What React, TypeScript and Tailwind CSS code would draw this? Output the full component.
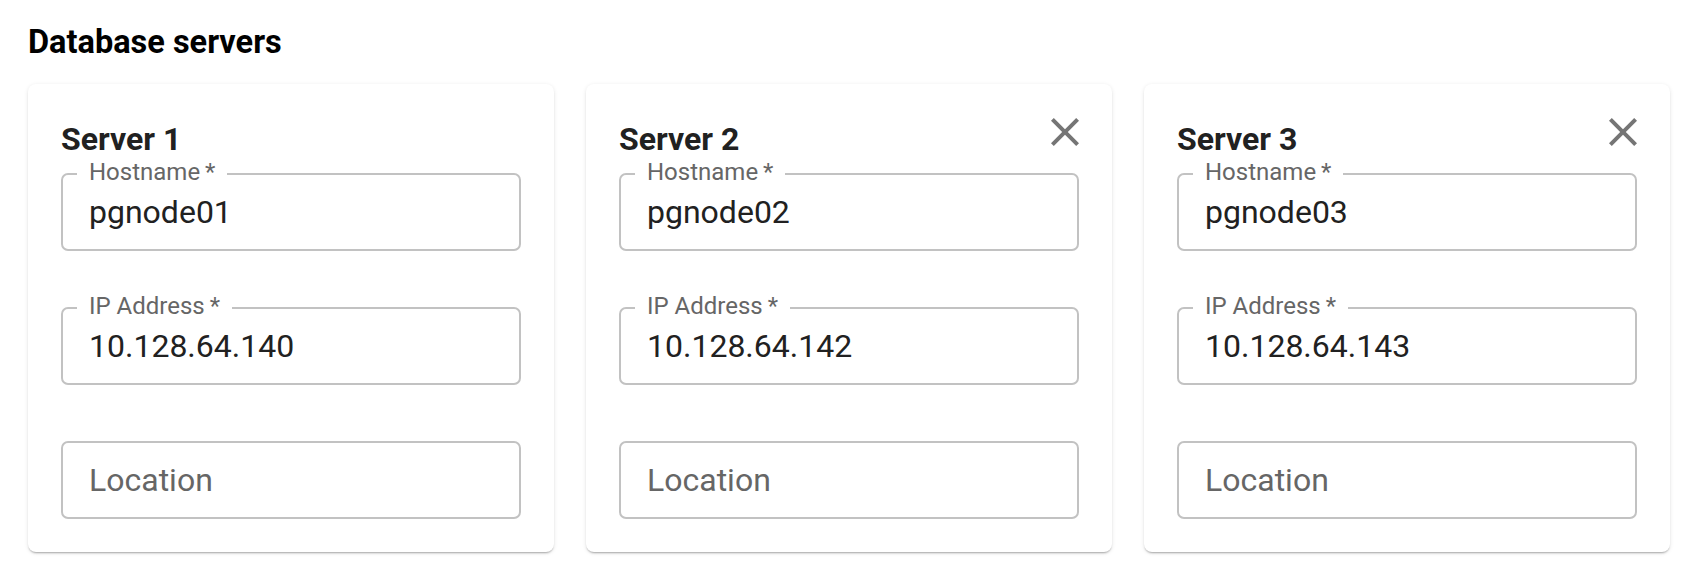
import React from "react";

type Server = { id: number; hostname: string; ip: string; removable: boolean };

const servers: Server[] = [
  { id: 1, hostname: "pgnode01", ip: "10.128.64.140", removable: false },
  { id: 2, hostname: "pgnode02", ip: "10.128.64.142", removable: true },
  { id: 3, hostname: "pgnode03", ip: "10.128.64.143", removable: true },
];

function CloseIcon() {
  return (
    <svg className="w-[28px] h-[28px] text-[#757575] shrink-0" viewBox="5 5 14 14" fill="currentColor">
      <path d="M19 6.41 17.59 5 12 10.59 6.41 5 5 6.41 10.59 12 5 17.59 6.41 19 12 13.41 17.59 19 19 17.59 13.41 12z" />
    </svg>
  );
}

function OutlinedField({ label, value }: { label?: string; value?: string }) {
  return (
    <div className="relative h-[78px] border-2 border-[#c2c2c2] rounded-[7px] flex items-center pl-[26px]">
      {label && value && (
        <span className="absolute top-[-15px] left-[14px] px-[12px] bg-white text-[24px] leading-none text-[#666666]">
          {label}&thinsp;*
        </span>
      )}
      <span className={value ? "text-[32px] text-[#212121]" : "text-[32px] text-[#666666]"}>
        {value ?? label}
      </span>
    </div>
  );
}

function ServerCard({ server }: { server: Server }) {
  return (
    <div className="bg-white rounded-[8px] px-[33px] pt-[33px] pb-[33px] shadow-[0_2px_2px_-1px_rgba(0,0,0,0.3),0_1px_4px_0_rgba(0,0,0,0.1)]">
      <div className="flex items-start justify-between">
        <h3 className="mt-[6px] text-[32px] leading-none font-bold text-[#212121]">Server {server.id}</h3>
        {server.removable && <div className="pt-[0.5px]"><CloseIcon /></div>}
      </div>
      <div className="mt-[18px] flex flex-col gap-[56px]">
        <OutlinedField label="Hostname" value={server.hostname} />
        <OutlinedField label="IP Address" value={server.ip} />
        <OutlinedField label="Location" />
      </div>
    </div>
  );
}

export default function App() {
  return (
    <div className="min-h-[584px] bg-white pl-[28px] pt-[26px] font-['Roboto',sans-serif]">
      <h2 className="text-[32.5px] leading-none font-bold text-black">Database servers</h2>
      <div className="mt-[25.5px] grid grid-cols-3 gap-[32px] w-[1642px]">
        {servers.map((s) => <ServerCard key={s.id} server={s} />)}
      </div>
    </div>
  );
}
